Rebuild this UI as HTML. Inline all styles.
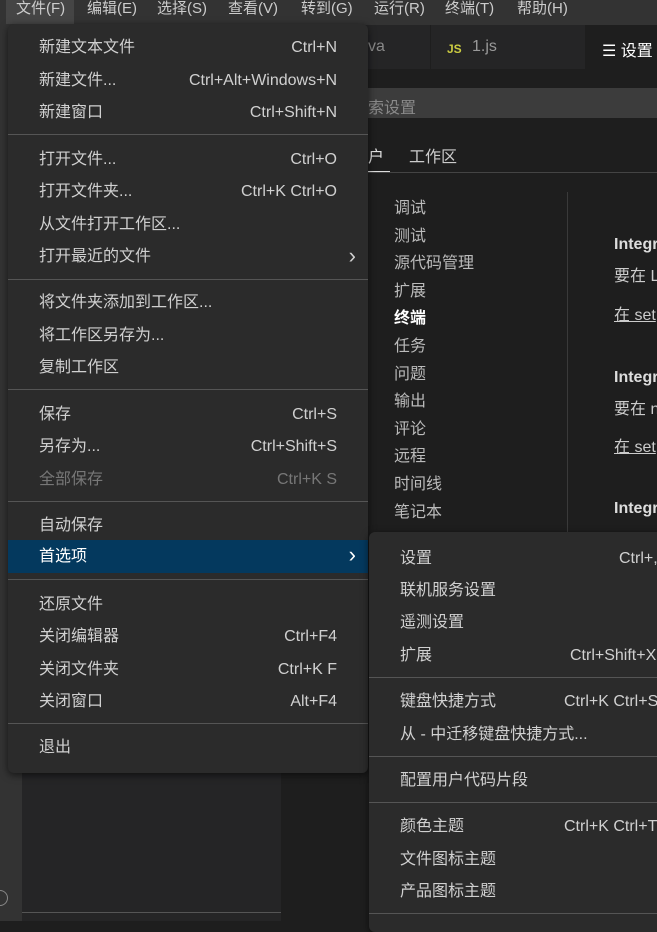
<!DOCTYPE html>
<html><head><meta charset="utf-8"><style>
*{margin:0;padding:0;box-sizing:border-box}
body{width:657px;height:921px;overflow:hidden;background:#1e1e1e;position:relative;font-family:"Liberation Sans","Noto Sans CJK SC",sans-serif;font-size:16px;color:#ccc}
.a{position:absolute;white-space:nowrap}
.menu{position:absolute;background:#2b2b2b;border-radius:6px;box-shadow:0 2px 8px rgba(0,0,0,.6)}
.it{position:absolute;left:0;right:0;height:32px;line-height:32px;color:#d0d0d0;font-size:16px}
.it .l{position:absolute;left:31px}
.it .r{position:absolute;right:31px}
.it .ch{position:absolute;right:12px;font-size:22px;line-height:30px}
.sep{position:absolute;left:0;right:0;height:1px;background:#555}
.dis{color:#777}
</style></head><body>
<div class="a" style="left:0;top:0;width:657px;height:25px;background:#333"></div>
<div class="a" style="left:6px;top:0;width:68px;height:24px;background:#454545"></div>
<div class="a" style="left:0;top:0;height:24px;line-height:17px;font-size:15px;color:#ccc">
<span style="position:absolute;left:16px">文件(F)</span><span style="position:absolute;left:87px">编辑(E)</span><span style="position:absolute;left:157px">选择(S)</span><span style="position:absolute;left:228px">查看(V)</span><span style="position:absolute;left:301px">转到(G)</span><span style="position:absolute;left:374px">运行(R)</span><span style="position:absolute;left:445px">终端(T)</span><span style="position:absolute;left:517px">帮助(H)</span></div>
<div class="a" style="left:0;top:25px;width:22px;height:896px;background:#333"></div>
<div class="a" style="left:22px;top:25px;width:259px;height:896px;background:#252526"></div>
<div class="a" style="left:22px;top:912px;width:259px;height:1px;background:#555"></div>
<div class="a" style="left:-8px;top:890px;width:16px;height:16px;border:1.5px solid #888;border-radius:50%"></div>
<div class="a" style="left:281px;top:25px;width:376px;height:44px;background:#252526"></div>
<div class="a" style="left:368px;top:38px;color:#888">va</div>
<div class="a" style="left:430px;top:25px;width:1px;height:44px;background:#1e1e1e"></div>
<div class="a" style="left:447px;top:39px;color:#cbcb41;font-weight:bold;font-size:12px;line-height:20px">JS</div>
<div class="a" style="left:472px;top:38px;color:#999">1.js</div>
<div class="a" style="left:585px;top:25px;width:72px;height:44px;background:#1e1e1e"></div>
<div class="a" style="left:602px;top:37px;color:#fff">☰ 设置</div>
<div class="a" style="left:281px;top:88px;width:376px;height:30px;background:#3c3c3c"></div>
<div class="a" style="left:368px;top:94px;color:#8a8a8a">索设置</div>
<div class="a" style="left:368px;top:143px;color:#e0e0e0">户</div>
<div class="a" style="left:409px;top:143px;color:#ccc">工作区</div>
<div class="a" style="left:368px;top:171px;width:22px;height:1px;background:#ddd"></div>
<div class="a" style="left:368px;top:172px;width:289px;height:1px;background:#444"></div>
<div class="a" style="left:567px;top:192px;width:1px;height:340px;background:#3a3a3a"></div>
<div class="a" style="left:394px;top:195px;line-height:27.6px;color:#bbb">调试<br>测试<br>源代码管理<br>扩展<br><b style="color:#fff">终端</b><br>任务<br>问题<br>输出<br>评论<br>远程<br>时间线<br>笔记本</div>
<div class="a" style="left:614px;top:236px;color:#ddd;font-weight:bold">Integr</div>
<div class="a" style="left:614px;top:262px;color:#ccc">要在 L</div>
<div class="a" style="left:614px;top:301px;color:#ccc;text-decoration:underline">在 set</div>
<div class="a" style="left:614px;top:369px;color:#ddd;font-weight:bold">Integr</div>
<div class="a" style="left:614px;top:395px;color:#ccc">要在 n</div>
<div class="a" style="left:614px;top:433px;color:#ccc;text-decoration:underline">在 set</div>
<div class="a" style="left:614px;top:500px;color:#ddd;font-weight:bold">Integr</div>
<div class="menu" style="left:8px;top:24px;width:360px;height:749px">
<div class="it" style="top:8px"><span class="l">新建文本文件</span><span class="r">Ctrl+N</span></div>
<div class="it" style="top:41px"><span class="l">新建文件...</span><span class="r">Ctrl+Alt+Windows+N</span></div>
<div class="it" style="top:73px"><span class="l">新建窗口</span><span class="r">Ctrl+Shift+N</span></div>
<div class="sep" style="top:110px"></div>
<div class="it" style="top:120px"><span class="l">打开文件...</span><span class="r">Ctrl+O</span></div>
<div class="it" style="top:152px"><span class="l">打开文件夹...</span><span class="r">Ctrl+K Ctrl+O</span></div>
<div class="it" style="top:185px"><span class="l">从文件打开工作区...</span></div>
<div class="it" style="top:217px"><span class="l">打开最近的文件</span><span class="ch">›</span></div>
<div class="sep" style="top:255px"></div>
<div class="it" style="top:263px"><span class="l">将文件夹添加到工作区...</span></div>
<div class="it" style="top:296px"><span class="l">将工作区另存为...</span></div>
<div class="it" style="top:328px"><span class="l">复制工作区</span></div>
<div class="sep" style="top:365px"></div>
<div class="it" style="top:375px"><span class="l">保存</span><span class="r">Ctrl+S</span></div>
<div class="it" style="top:407px"><span class="l">另存为...</span><span class="r">Ctrl+Shift+S</span></div>
<div class="it dis" style="top:440px"><span class="l">全部保存</span><span class="r">Ctrl+K S</span></div>
<div class="sep" style="top:477px"></div>
<div class="it" style="top:486px"><span class="l">自动保存</span></div>
<div class="it" style="top:516px;height:33px;line-height:34px;background:#04395e;color:#fff"><span class="l">首选项</span><span class="ch">›</span></div>
<div class="sep" style="top:555px"></div>
<div class="it" style="top:565px"><span class="l">还原文件</span></div>
<div class="it" style="top:597px"><span class="l">关闭编辑器</span><span class="r">Ctrl+F4</span></div>
<div class="it" style="top:630px"><span class="l">关闭文件夹</span><span class="r">Ctrl+K F</span></div>
<div class="it" style="top:662px"><span class="l">关闭窗口</span><span class="r">Alt+F4</span></div>
<div class="sep" style="top:699px"></div>
<div class="it" style="top:708px"><span class="l">退出</span></div>
</div>
<div class="menu" style="left:369px;top:532px;width:320px;height:400px">
<div class="it" style="top:11px"><span class="l">设置</span><span class="a" style="left:250px">Ctrl+,</span></div>
<div class="it" style="top:43px"><span class="l">联机服务设置</span></div>
<div class="it" style="top:75px"><span class="l">遥测设置</span></div>
<div class="it" style="top:108px"><span class="l">扩展</span><span class="a" style="left:201px">Ctrl+Shift+X</span></div>
<div class="sep" style="top:145px"></div>
<div class="it" style="top:154px"><span class="l">键盘快捷方式</span><span class="a" style="left:195px">Ctrl+K Ctrl+S</span></div>
<div class="it" style="top:187px"><span class="l">从 - 中迁移键盘快捷方式...</span></div>
<div class="sep" style="top:224px"></div>
<div class="it" style="top:233px"><span class="l">配置用户代码片段</span></div>
<div class="sep" style="top:270px"></div>
<div class="it" style="top:279px"><span class="l">颜色主题</span><span class="a" style="left:195px">Ctrl+K Ctrl+T</span></div>
<div class="it" style="top:312px"><span class="l">文件图标主题</span></div>
<div class="it" style="top:344px"><span class="l">产品图标主题</span></div>
<div class="sep" style="top:381px"></div>
</div>
</body></html>
